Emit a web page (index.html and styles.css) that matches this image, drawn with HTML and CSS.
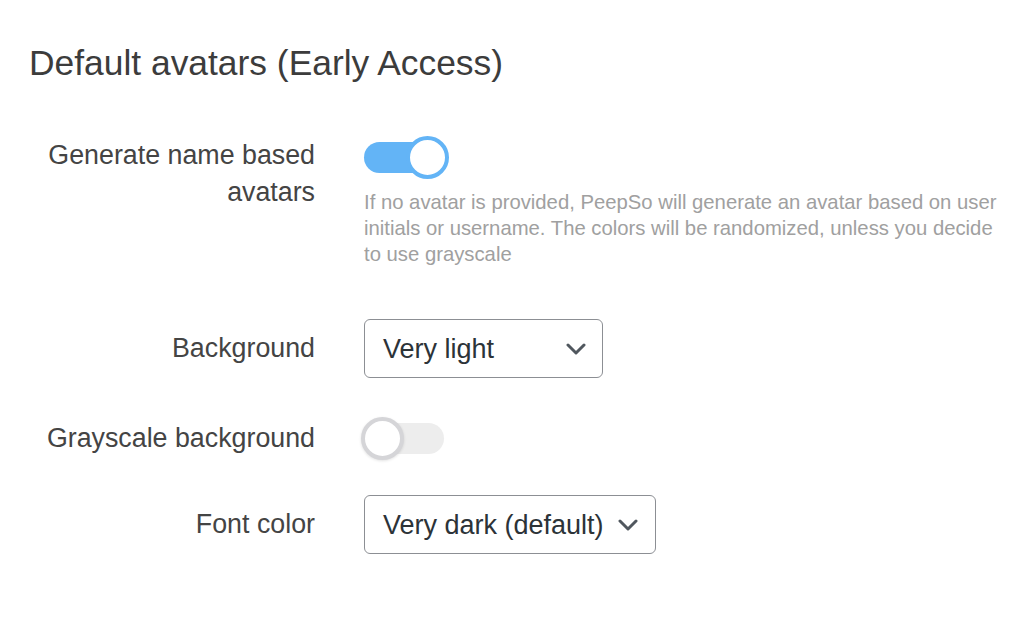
FILE: index.html
```html
<!DOCTYPE html>
<html lang="en">
<head>
<meta charset="utf-8">
<title>Default avatars</title>
<link rel="stylesheet" href="styles.css">
</head>
<body>
<main class="page">
  <h1 class="title">Default avatars (Early Access)</h1>

  <div class="row row-top row-first">
    <div class="label">Generate name based<br>avatars</div>
    <div class="control">
      <div class="toggle toggle-on">
        <span class="track"></span>
        <span class="knob"></span>
      </div>
      <p class="desc">If no avatar is provided, PeepSo will generate an avatar based on user initials or username. The colors will be randomized, unless you decide to use grayscale</p>
    </div>
  </div>

  <div class="row row-select-1">
    <div class="label">Background</div>
    <div class="control">
      <div class="select select-bg">
        <span class="select-text">Very light</span>
        <svg class="chev" width="20" height="12" viewBox="0 0 20 12"><path d="M2 2 L10 10 L18 2" fill="none" stroke="#50575e" stroke-width="3" stroke-linecap="round" stroke-linejoin="round"/></svg>
      </div>
    </div>
  </div>

  <div class="row row-toggle-2">
    <div class="label">Grayscale background</div>
    <div class="control">
      <div class="toggle toggle-off">
        <span class="track"></span>
        <span class="knob"></span>
      </div>
    </div>
  </div>

  <div class="row row-select-2">
    <div class="label">Font color</div>
    <div class="control">
      <div class="select select-font">
        <span class="select-text">Very dark (default)</span>
        <svg class="chev" width="20" height="12" viewBox="0 0 20 12"><path d="M2 2 L10 10 L18 2" fill="none" stroke="#50575e" stroke-width="3" stroke-linecap="round" stroke-linejoin="round"/></svg>
      </div>
    </div>
  </div>
</main>
</body>
</html>
```

FILE: styles.css
```css
html, body {
  margin: 0;
  padding: 0;
  background: #ffffff;
}

body {
  font-family: "Liberation Sans", Arial, sans-serif;
  color: #3c434a;
}

.page {
  padding: 43px 0 0 29px;
  display: flex;
  flex-direction: column;
}

.title {
  margin: 0;
  font-size: 35.4px;
  line-height: 40px;
  font-weight: 400;
  color: #3c3c3c;
}

.row {
  display: grid;
  grid-template-columns: 286px 1fr;
  column-gap: 49px;
  align-items: center;
}

.row-top {
  align-items: start;
}

.row-first {
  margin-top: 53px;
}

.row-select-1 {
  margin-top: 52px;
}

.row-toggle-2 {
  margin-top: 39px;
}

.row-select-2 {
  margin-top: 35px;
}

.label {
  text-align: right;
  font-size: 26.8px;
  line-height: 37px;
  color: #444444;
}

.row-first .label {
  margin-top: 1px;
}

.control {
  display: flex;
  flex-direction: column;
  align-items: flex-start;
}

.toggle {
  position: relative;
  width: 85px;
  height: 43px;
}

.toggle .track {
  position: absolute;
  left: 0;
  top: 6px;
  width: 80px;
  height: 31px;
  border-radius: 16px;
}

.toggle .knob {
  position: absolute;
  top: 0;
  width: 35px;
  height: 35px;
  border-radius: 50%;
  background: #ffffff;
  border: 4px solid;
}

.toggle-on .track {
  background: #63b4f6;
}

.toggle-on .knob {
  right: 0;
  border-color: #63b4f6;
}

.toggle-off {
  width: 83px;
  margin-left: -3px;
}

.toggle-off .track {
  left: 3px;
  background: #ededed;
}

.toggle-off .knob {
  left: 0;
  border-color: #d5d5d8;
  box-shadow: 0 1px 3px rgba(0, 0, 0, 0.12);
}

.desc {
  margin: 10px 0 0 0;
  width: 645px;
  font-size: 20.3px;
  line-height: 26px;
  color: #a0a0a0;
}

.select {
  box-sizing: border-box;
  height: 59px;
  display: flex;
  align-items: center;
  padding: 0 16px 0 18px;
  border: 1.5px solid #8c8f94;
  border-radius: 6px;
  background: #ffffff;
}

.select-bg {
  width: 239px;
}

.select-font {
  width: 292px;
  padding-right: 17px;
}

.select-text {
  font-size: 27px;
  color: #2c3338;
  line-height: 32px;
}

.chev {
  margin-left: auto;
  display: block;
}
```
